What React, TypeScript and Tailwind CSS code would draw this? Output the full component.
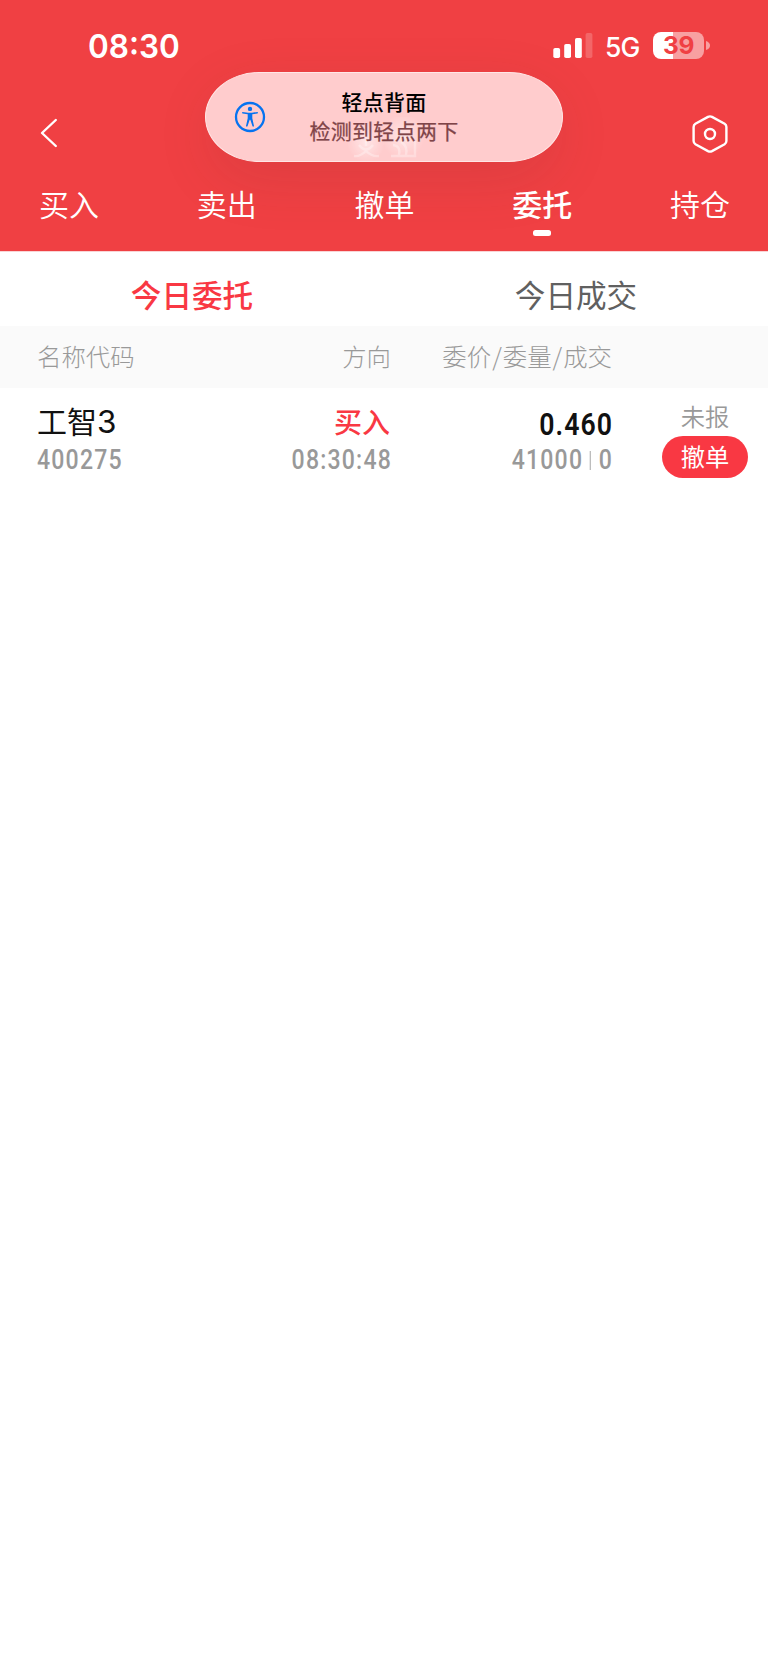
import React from 'react';

const CJK = "font-['Noto_Sans_CJK_SC',sans-serif]";
const DIGITS = "font-['Roboto',sans-serif] scale-x-[0.86] text-[26.8px] leading-[32px] tracking-[1.4px] font-medium text-[#999]";

const navTabs = ['买入', '卖出', '撤单', '委托', '持仓'];

function StatusBar() {
  return (
    <div className="flex h-[92px] items-start pr-[59px] pl-[88px]">
      <div className="mt-[26px] origin-left scale-x-[0.955] font-['Inter',sans-serif] text-[33px] leading-[40px] font-semibold">08:30</div>
      <div className="ml-auto flex items-start">
        <svg className="mt-[33px] h-[25px] w-[40px]" viewBox="0 0 40 25" fill="#fff">
          <rect x="0.3" y="15" width="6.8" height="10" rx="1.8" />
          <rect x="11.2" y="11" width="6.8" height="14" rx="1.8" />
          <rect x="22" y="5" width="6.8" height="20" rx="1.8" />
          <rect x="32.6" y="0" width="6.8" height="25" rx="1.8" opacity="0.2" />
        </svg>
        <div className="mt-[31px] ml-[12px] w-[36px] font-['Inter',sans-serif] text-[26.5px] leading-[32px] font-medium tracking-[-0.9px]">5G</div>
        <div className="mt-[32px] ml-[12px] flex h-[27px] w-[51px] items-center justify-center rounded-[8px] bg-[linear-gradient(90deg,#fff_39%,#f8a0a1_39%)] font-['Inter',sans-serif] text-[24.5px] font-bold tracking-[-0.3px] text-[#f04043]">39</div>
        <svg className="-mr-px mt-[41px] ml-[2px] h-[9px] w-[4px]" viewBox="0 0 4 9">
          <path d="M0 0Q4 1.500 4 4.500Q4 7.500 0 9Z" fill="#f8a0a1" />
        </svg>
      </div>
    </div>
  );
}

function Notice() {
  return (
    <div className="absolute top-[72px] left-[205px] h-[90px] w-[358px] overflow-hidden rounded-[54px/45px] border-[1.5px] border-[#ffe6e6] bg-[#ffcccd]">
      <svg className="absolute top-[28px] left-[28px] h-[32px] w-[32px]" viewBox="0 0 32 32" fill="#0673f0">
        <circle cx="16" cy="16" r="14" fill="none" stroke="#0673f0" strokeWidth="2.3" />
        <circle cx="16" cy="7.900" r="2.2" />
        <path d="M8.500 10.900L14 11.700H18L23.500 10.900Q24.500 12 23.500 12.400L18.300 13.300V17.200L20 25Q19.300 26.400 18.500 25.300L16.300 18.800H15.700L13.500 25.300Q12.700 26.400 12 25L13.700 17.200V13.300L8.500 12.400Q7.500 12 8.500 10.900Z" />
      </svg>
      <svg className="absolute top-[44px] left-[134px] h-[44px] w-[90px]" viewBox="0 0 90 44" fill="none" stroke="#fff">
        <defs>
          <radialGradient id="glow">
            <stop offset="0" stopColor="#fff" stopOpacity="0.5" />
            <stop offset="1" stopColor="#fff" stopOpacity="0" />
          </radialGradient>
        </defs>
        <ellipse cx="26" cy="25" rx="19" ry="20" fill="url(#glow)" stroke="none" />
        <ellipse cx="63" cy="19" rx="22" ry="22" fill="url(#glow)" stroke="none" />
        <g strokeWidth="2.4" opacity="0.3">
          <path d="M14 39Q20 40 26 34Q32 40 39 39M19 28Q26 37 33 28M26 24V29" />
          <path d="M51 39H75V24M53 28Q61 29 59 38M61 25Q68 29 66 38" />
        </g>
      </svg>
      <div className="relative flex flex-col items-center pt-[14px] text-[21px] leading-[29px]">
        <div className="font-medium tracking-[0.2px] text-black">轻点背面</div>
        <div className="tracking-[0.3px] text-[#7f4448] [-webkit-text-stroke:0.25px_#7f4448]">检测到轻点两下</div>
      </div>
    </div>
  );
}

export default function App() {
  return (
    <div className={`${CJK} relative min-h-[1662px] w-[768px] bg-white`}>
      <header className="relative h-[251px] overflow-hidden bg-[#f04043] text-white">
        <div className="absolute top-[76px] left-[212px] h-[84px] w-[344px] rounded-full shadow-[0_16px_60px_0_rgba(100,50,50,0.14)]" />
        <div className="relative">
          <StatusBar />
          <div className="flex h-[82px] items-center justify-between pr-[41px] pl-[40px]">
            <svg className="h-[30px] w-[18px]" viewBox="0 0 18 30" fill="none" stroke="#fff" strokeWidth="2.4" strokeLinecap="round" strokeLinejoin="round">
              <path d="M15.800 2L2 15L15.800 28" />
            </svg>
            <svg className="-mr-px mt-[2px] h-[38px] w-[36px]" viewBox="0 0 36 38" fill="none" stroke="#fff" strokeWidth="2.4">
              <path d="M16 1.900Q18 0.900 20 1.900L32.600 8.800Q34.400 9.900 34.400 12V26Q34.400 28.100 32.600 29.200L20 36.100Q18 37.100 16 36.100L3.400 29.200Q1.600 28.100 1.600 26V12Q1.600 9.900 3.400 8.800Z" />
              <circle cx="18" cy="19" r="5" />
            </svg>
          </div>
          <nav className="flex justify-between pt-[7px] pr-[38px] pl-[39px] text-[30px] leading-[44px]">
            {navTabs.map((t) => (
              <div key={t} className={t === '委托' ? 'flex flex-col items-center font-medium' : 'flex flex-col items-center font-[350]'}>
                {t}
                {t === '委托' && <span className="mt-[5px] h-[6px] w-[18px] rounded-[2.5px] bg-white" />}
              </div>
            ))}
          </nav>
        </div>
      </header>
      <Notice />
      <div className="grid h-[75px] grid-cols-2 border-t border-[#f9d4d5] pt-[19px] text-center text-[30.6px] leading-[46px]">
        <div className="font-medium text-[#f93843]">今日委托</div>
        <div className="text-[#606060]">今日成交</div>
      </div>
      <div className="flex h-[62px] items-center bg-[#fafafa] pb-[3px] pl-[37px] text-[24.4px] leading-[36px] font-light text-[#999]">
        <div className="w-[150px]">名称代码</div>
        <div className="w-[204px] text-right">方向</div>
        <div className="w-[221px] text-right">委价<span className="mx-[1px]">/</span>委量<span className="mx-[1px]">/</span>成交</div>
      </div>
      <div className="flex h-[104px] pl-[37px]">
        <div className="w-[150px] pt-[10px]">
          <div className="h-[46px] text-[30px] leading-[44px] text-[#111]">工智<span className="font-['Inter',sans-serif] text-[31.5px] leading-none">3</span></div>
          <div className={`${DIGITS} origin-left`}>400275</div>
        </div>
        <div className="w-[203px] pt-[10px] text-right">
          <div className="h-[46px] pt-px text-[28px] leading-[44px] font-medium text-[#f93843]">买入</div>
          <div className={`${DIGITS} -mr-[2px] origin-right`}>08:30:48</div>
        </div>
        <div className="w-[222px] pt-[10px] text-right">
          <div className="-mr-[1px] h-[46px] origin-right scale-x-[0.86] pt-[5px] font-['Roboto',sans-serif] text-[31px] leading-[44px] font-semibold tracking-[1.2px] text-[#111]">0.460</div>
          <div className={`${DIGITS} -mr-[1px] flex origin-right items-center justify-end`}>41000<span className="mr-[9px] ml-[8px] h-[19px] w-px bg-[#999]" />0</div>
        </div>
        <div className="ml-[50px] flex w-[86px] flex-col items-center pt-[10px] text-[24.3px]">
          <div className="leading-[36px] font-[350] text-[#999]">未报</div>
          <button className="mt-[2px] flex h-[42px] w-[86px] items-center justify-center rounded-full bg-[#f93843] pb-[3px] leading-[36px] text-white">撤单</button>
        </div>
      </div>
    </div>
  );
}
